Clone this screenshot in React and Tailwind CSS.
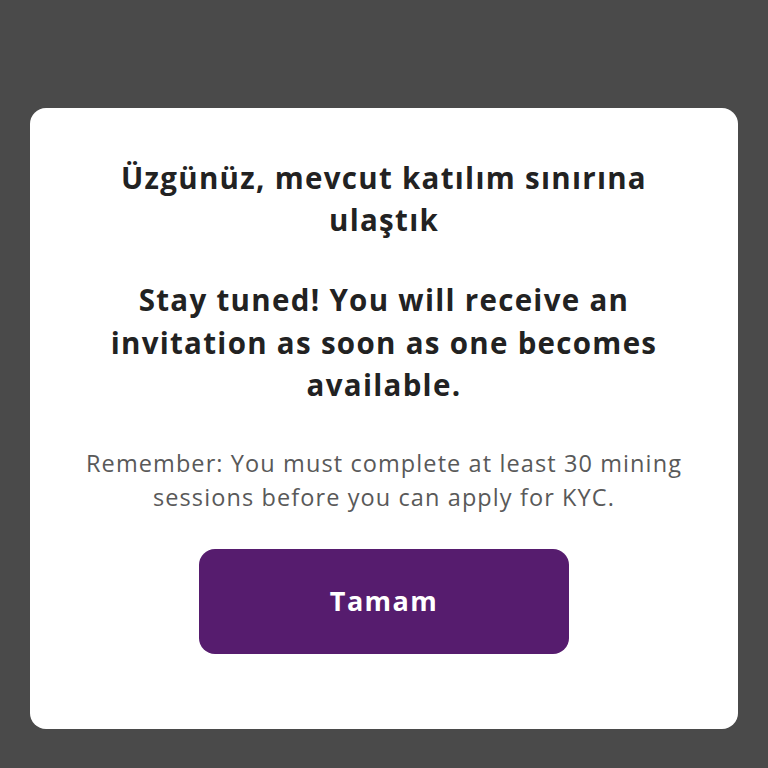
export default function App() {
  return (
    <div className="min-h-[768px] w-full bg-[#4a4a4a] px-[30px] pt-[108px] pb-[40px] flex flex-col" style={{ fontFamily: "'Open Sans', 'Noto Sans', sans-serif" }}>
      <div className="bg-white rounded-[16px] w-full pt-[49px] pb-[75px] px-[20px] flex flex-col items-center text-center">
        <h1 className="text-[29.5px] leading-[42px] font-bold tracking-[1.3px] text-[#222222]">
          Üzgünüz, mevcut katılım sınırına
          <br />
          ulaştık
        </h1>
        <h2 className="mt-[38px] text-[29.5px] leading-[42.5px] font-bold tracking-[1.3px] text-[#222222]">
          Stay tuned! You will receive an
          <br />
          invitation as soon as one becomes
          <br />
          available.
        </h2>
        <p className="mt-[39px] text-[23.5px] leading-[34px] tracking-[1.1px] text-[#595959]">
          Remember: You must complete at least 30 mining
          <br />
          sessions before you can apply for KYC.
        </p>
        <button className="mt-[35px] w-[370px] h-[105px] rounded-[16px] bg-[#561c6e] text-white text-[27px] font-bold tracking-[1.4px]">
          Tamam
        </button>
      </div>
    </div>
  );
}
